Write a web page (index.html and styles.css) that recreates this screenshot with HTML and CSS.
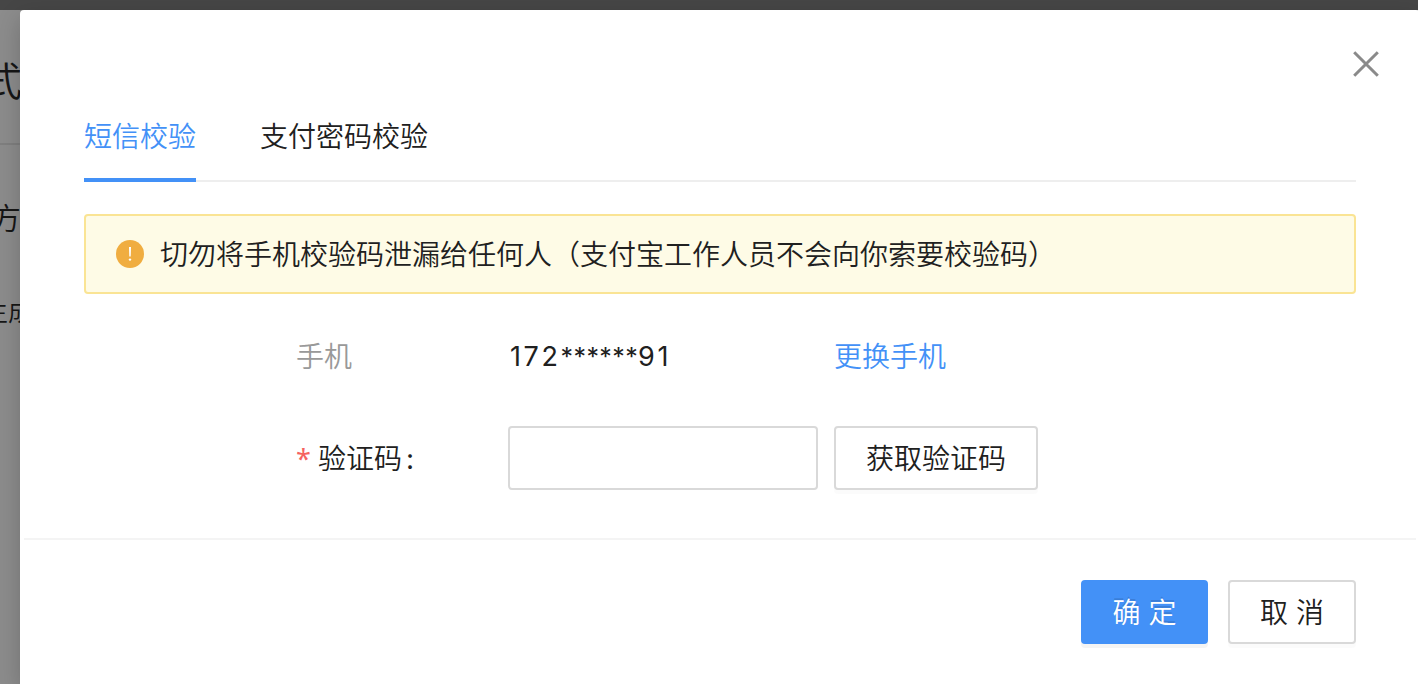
FILE: index.html
```html
<!DOCTYPE html>
<html lang="zh-CN">
<head>
<meta charset="UTF-8" />
<title>短信校验</title>
<link rel="stylesheet" href="styles.css">
</head>
<body>
    <div class="page">
        <div class="page-bar"></div>
        <div class="page-title">式</div>
        <div class="page-label">方</div>
        <div class="page-text">生成</div>
    </div>

    <div class="modal" role="dialog">
        <button class="modal-close" type="button" aria-label="关闭">
            <svg width="26" height="26" viewBox="0 0 26 26"><path d="M1.2 1.2L24.8 24.8M24.8 1.2L1.2 24.8" fill="none" stroke="#8a8a8a" stroke-width="3" /></svg>
        </button>

        <div class="modal-body">
            <nav class="tabs">
                <a class="tab tab-active">短信校验</a>
                <a class="tab">支付密码校验</a>
            </nav>

            <div class="alert">
                <svg class="alert-icon" width="28" height="28" viewBox="0 0 28 28">
                    <circle cx="14" cy="14" r="14" fill="#f0ad40" />
                    <path d="M13 7h2l-.3 9.6h-1.4z" fill="#fff" />
                    <circle cx="14" cy="19.6" r="1.2" fill="#fff" />
                </svg>
                <span class="alert-text">切勿将手机校验码泄漏给任何人（支付宝工作人员不会向你索要校验码）</span>
            </div>

            <form class="form">
                <div class="row">
                    <span class="label label-light">手机</span>
                    <span class="phone">172<span class="mask">******</span>91</span>
                    <a class="link">更换手机</a>
                </div>
                <div class="row row-code">
                    <label class="label label-code" for="code"><span class="required">*</span>验证码<span class="colon">:</span></label>
                    <input class="input" type="text" id="code" />
                    <button class="btn btn-code" type="button">获取验证码</button>
                </div>
            </form>
        </div>

        <footer class="modal-footer">
            <button class="btn btn-primary" type="button">确 定</button>
            <button class="btn btn-cancel" type="button">取 消</button>
        </footer>
    </div>
</body>
</html>
```
FILE: styles.css
```css
* {
    box-sizing:border-box;
    margin:0;
    padding:0;
}

body {
    position:relative;
    height:684px;
    overflow:hidden;
    font-family:Inter, "Noto Sans CJK SC", sans-serif;
    font-size:28px;
    font-weight:350;
    line-height:40px;
    color:#202020;
    background-color:#8c8c8c;
}

.page {
    width:60px;
    color:#161616;
    white-space:nowrap;
}

.page-bar {
    width:1418px;
    height:10px;
    background-color:#464646;
}

.page-title {
    height:135px;
    padding-top:52px;
    border-bottom:2px solid #7f7f7f;
    font-size:40px;
    text-indent:-18px;
}

.page-label {
    padding-top:53px;
    font-size:30px;
    text-indent:-9px;
}

.page-text {
    padding-top:54px;
    font-size:25px;
    text-indent:-17px;
}

.modal {
    position:absolute;
    top:10px;
    left:20px;
    width:1400px;
    height:674px;
    border-radius:4px 4px 0 0;
    background-color:#fff;
    box-shadow:0 8px 24px rgba(0, 0, 0, 0.2);
}

.modal-close {
    position:absolute;
    top:41px;
    right:41px;
    width:26px;
    height:26px;
    border:0;
    background:none;
}

.modal-close svg {
    display:block;
}

.modal-body {
    height:528px;
    padding:84px 64px 0;
}

.tabs {
    display:flex;
    gap:64px;
    height:88px;
    border-bottom:2px solid #eee;
}

.tab {
    height:88px;
    padding-top:23px;
}

.tab-active {
    border-bottom:4px solid #4391f7;
    color:#4391f7;
}

.alert {
    display:flex;
    align-items:center;
    gap:16px;
    height:80px;
    margin-top:32px;
    padding:0 30px;
    border:2px solid #fae494;
    border-radius:4px;
    background-color:#fefbe6;
}

.alert-text {
    padding-top:2px;
}

.form {
    padding:43px 0 0 212px;
}

.row {
    display:flex;
    align-items:center;
    height:40px;
}

.row-code {
    height:64px;
    margin-top:49px;
}

.label {
    width:212px;
}

.label-code {
    padding-top:2px;
}

.label-light {
    color:#999;
}

.required {
    display:inline-block;
    width:22px;
    font-family:"Noto Sans", sans-serif;
    font-size:27px;
    font-weight:400;
    color:#f5635f;
}

.colon {
    margin-left:4px;
    font-weight:400;
}

.phone {
    width:326px;
    padding-left:2px;
    font-size:27px;
    font-weight:400;
    letter-spacing:2.6px;
}

.mask {
    font-size:25px;
    letter-spacing:0.4px;
}

.link {
    color:#4391f7;
}

.input {
    width:310px;
    height:64px;
    margin-right:16px;
    border:2px solid #d9d9d9;
    border-radius:4px;
}

.btn {
    height:64px;
    padding-top:2px;
    border:2px solid #d9d9d9;
    border-radius:4px;
    font:inherit;
    color:#202020;
    background-color:#fff;
    box-shadow:0 4px 0 rgba(0, 0, 0, 0.015);
}

.btn-code {
    width:204px;
}

.modal-footer {
    display:flex;
    justify-content:flex-end;
    margin:0 4px;
    padding:40px 60px 0;
    border-top:2px solid #f4f4f4;
}

.btn-primary {
    width:127px;
    margin-right:20px;
    border-color:#4391f7;
    color:#fff;
    text-shadow:0 -2px 0 rgba(0, 0, 0, 0.12);
    background-color:#4391f7;
    box-shadow:0 4px 0 rgba(0, 0, 0, 0.045);
}

.btn-cancel {
    width:128px;
}
```
